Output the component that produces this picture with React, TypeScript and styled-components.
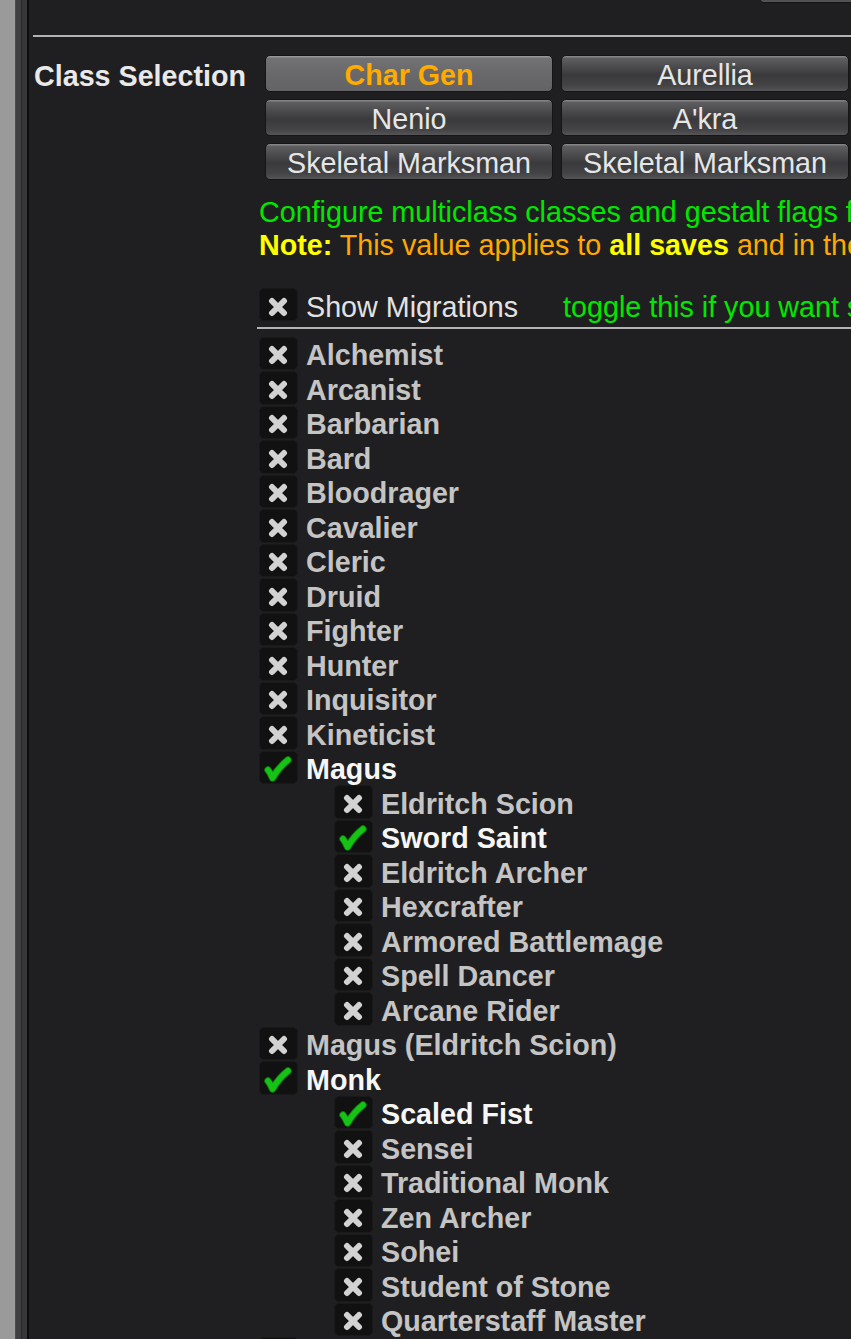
import React from 'react';
import styled, { createGlobalStyle } from 'styled-components';

const GlobalStyle = createGlobalStyle`
  html, body {
    margin: 0;
    padding: 0;
    background: #1f1f21;
    overflow: hidden;
  }
  body {
    font-family: 'Liberation Sans', Arial, Helvetica, sans-serif;
  }
`;

type Item = { name: string; checked?: boolean; sub?: boolean };

const classes: Item[] = [
  { name: 'Alchemist' },
  { name: 'Arcanist' },
  { name: 'Barbarian' },
  { name: 'Bard' },
  { name: 'Bloodrager' },
  { name: 'Cavalier' },
  { name: 'Cleric' },
  { name: 'Druid' },
  { name: 'Fighter' },
  { name: 'Hunter' },
  { name: 'Inquisitor' },
  { name: 'Kineticist' },
  { name: 'Magus', checked: true },
  { name: 'Eldritch Scion', sub: true },
  { name: 'Sword Saint', sub: true, checked: true },
  { name: 'Eldritch Archer', sub: true },
  { name: 'Hexcrafter', sub: true },
  { name: 'Armored Battlemage', sub: true },
  { name: 'Spell Dancer', sub: true },
  { name: 'Arcane Rider', sub: true },
  { name: 'Magus (Eldritch Scion)' },
  { name: 'Monk', checked: true },
  { name: 'Scaled Fist', sub: true, checked: true },
  { name: 'Sensei', sub: true },
  { name: 'Traditional Monk', sub: true },
  { name: 'Zen Archer', sub: true },
  { name: 'Sohei', sub: true },
  { name: 'Student of Stone', sub: true },
  { name: 'Quarterstaff Master', sub: true },
  { name: 'Oracle' },
];

const saves = [
  { label: 'Char Gen', active: true },
  { label: 'Aurellia' },
  { label: 'Nenio' },
  { label: "A'kra" },
  { label: 'Skeletal Marksman' },
  { label: 'Skeletal Marksman' },
];

const CrossIcon = () => (
  <svg width="22" height="20" viewBox="0 0 22 20">
    <path
      d="M5 4 L17 16 M17 4 L5 16"
      stroke="#d2d2d2"
      strokeWidth="6"
      strokeLinecap="round"
      fill="none"
    />
  </svg>
);

const CheckIcon = () => (
  <svg width="37" height="32" viewBox="0 0 37 32">
    <path
      d="M8 19 Q10.5 22 12.5 27 Q19 16 28 9"
      stroke="#0b7a0b"
      strokeWidth="7.4"
      strokeLinecap="round"
      strokeLinejoin="round"
      fill="none"
    />
    <path
      d="M8 19 Q10.5 22 12.5 27 Q19 16 28 9"
      stroke="#17c217"
      strokeWidth="5.6"
      strokeLinecap="round"
      strokeLinejoin="round"
      fill="none"
    />
  </svg>
);

const Checkbox = ({ checked }: { checked?: boolean }) => (
  <Box $checked={checked}>{checked ? <CheckIcon /> : <CrossIcon />}</Box>
);

const App = () => {
  return (
    <>
      <GlobalStyle />
      <Screen>
        <Stripe $w={15} $bg="#9a9a9a" />
        <Stripe $w={1} $bg="#4c4c4e" />
        <Stripe $w={5} $bg="#3f3f41" />
        <Stripe $w={1} $bg="#29292b" />
        <Stripe $w={5} $bg="#37373a" />
        <Stripe $w={2} $bg="#0d0d0e" />
        <Main>
          <TopBar>
            <SaveButton $top />
          </TopBar>

          <SelectionRow>
            <SectionLabel>Class Selection</SectionLabel>
            <ButtonGrid>
              {saves.map((s, i) => (
                <SaveButton key={i} $active={s.active}>
                  {s.label}
                </SaveButton>
              ))}
            </ButtonGrid>
          </SelectionRow>

          <Content>
            <InfoLine $color="#00e800">
              Configure multiclass classes and gestalt flags for each character
            </InfoLine>
            <InfoLine $color="#ffa800">
              <Strong>Note:</Strong> This value applies to <Strong>all saves</Strong> and in
              the current save as well
            </InfoLine>

            <MigrationRow>
              <Checkbox />
              <MigrationLabel>Show Migrations</MigrationLabel>
              <Hint>toggle this if you want see the migrated classes</Hint>
            </MigrationRow>
            <Rule />

            <ClassList>
              {classes.map((c, i) => (
                <ClassRow key={i} $sub={c.sub}>
                  <Checkbox checked={c.checked} />
                  <ClassName $checked={c.checked}>{c.name}</ClassName>
                </ClassRow>
              ))}
            </ClassList>
          </Content>
        </Main>
      </Screen>
    </>
  );
};

const Screen = styled.div`
  display: flex;
  height: 1339px;
  width: 851px;
  overflow: hidden;
  background: #1f1f21;
`;

const Stripe = styled.div<{ $w: number; $bg: string }>`
  flex: 0 0 ${p => p.$w}px;
  background: ${p => p.$bg};
`;

const Main = styled.div`
  flex: 1;
  min-width: 0;
  padding-left: 4px;
  overflow: hidden;
`;

const TopBar = styled.div`
  height: 35px;
  display: flex;
  justify-content: flex-end;
  border-bottom: 2px solid #b2b2b2;
`;

const SelectionRow = styled.div`
  display: flex;
  align-items: flex-start;
  padding-top: 18px;
`;

const SectionLabel = styled.div`
  flex: 0 0 231px;
  padding: 3px 0 0 1px;
  box-sizing: border-box;
  font-size: 28.7px;
  font-weight: bold;
  color: #e9e9e9;
  line-height: 37px;
  white-space: nowrap;
`;

const ButtonGrid = styled.div`
  display: grid;
  grid-template-columns: 288px 288px;
  gap: 7px 8px;
  margin-left: 1px;
`;

const SaveButton = styled.div<{ $active?: boolean; $top?: boolean }>`
  box-sizing: border-box;
  height: 37px;
  padding-top: 4px;
  border: 1px solid #151515;
  border-radius: 5px;
  display: flex;
  align-items: center;
  justify-content: center;
  font-size: 28.7px;
  white-space: nowrap;
  overflow: hidden;
  color: ${p => (p.$active ? '#ffab00' : '#e6e6e6')};
  font-weight: ${p => (p.$active ? 'bold' : 'normal')};
  background: ${p =>
    p.$active
      ? 'linear-gradient(to bottom, #a0a0a2 0, #727274 7%, #69696b 50%, #636365 100%)'
      : 'linear-gradient(to bottom, #8e8e90 0, #5e5e60 7%, #48484a 35%, #3a3a3c 55%, #444446 85%, #555557 100%)'};
  ${p => (p.$top ? 'width: 110px; margin-top: -34px; margin-right: -18px;' : '')}
`;

const Content = styled.div`
  margin-left: 226px;
  margin-top: 16px;
`;

const InfoLine = styled.div<{ $color: string }>`
  font-size: 28.7px;
  line-height: 33px;
  color: ${p => p.$color};
  white-space: nowrap;
`;

const Strong = styled.b`
  color: #ffff00;
  font-weight: bold;
`;

const MigrationRow = styled.div`
  display: flex;
  align-items: center;
  margin-top: 26px;
  height: 33px;
  white-space: nowrap;
`;

const MigrationLabel = styled.span`
  margin-left: 8px;
  padding-top: 6px;
  font-size: 28.7px;
  color: #e2e2e2;
`;

const Hint = styled.span`
  margin-left: 45px;
  padding-top: 6px;
  font-size: 28.7px;
  color: #00e800;
`;

const Rule = styled.div`
  height: 2px;
  margin: 6px 0 0 -2px;
  background: #b4b4b4;
`;

const ClassList = styled.div`
  margin-top: 7px;
`;

const ClassRow = styled.div<{ $sub?: boolean }>`
  display: flex;
  align-items: center;
  height: 34.5px;
  padding-left: ${p => (p.$sub ? 75 : 0)}px;
  white-space: nowrap;
`;

const Box = styled.div<{ $checked?: boolean }>`
  flex: 0 0 39px;
  height: 33.5px;
  box-sizing: border-box;
  border-radius: 5px;
  background: #111112;
  border: 1px solid #19191a;
  display: flex;
  align-items: center;
  justify-content: center;
  padding-top: ${p => (p.$checked ? 0 : 4)}px;
  padding-right: ${p => (p.$checked ? 0 : 2)}px;
  overflow: hidden;
`;

const ClassName = styled.span<{ $checked?: boolean }>`
  margin-left: 8px;
  font-size: 28.7px;
  font-weight: bold;
  padding-top: 5px;
  color: ${p => (p.$checked ? '#f6f6f6' : '#c4c4c4')};
`;

export default App;
